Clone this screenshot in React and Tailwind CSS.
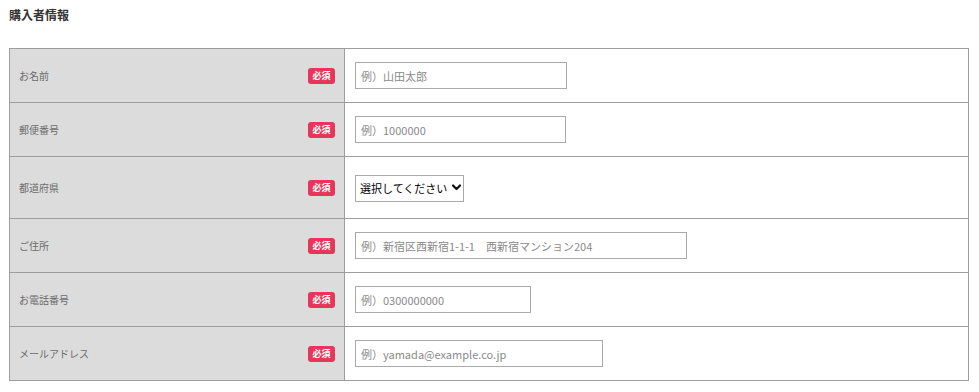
import React from "react";

const font = { fontFamily: '"Noto Sans CJK JP", "Noto Sans", sans-serif' };

function Badge() {
  return (
    <span className="inline-flex h-[16px] w-[27px] items-center justify-center rounded-[3px] bg-[#e8365b] text-[9px] font-bold leading-none text-white">
      必須
    </span>
  );
}

function Row({ label, tall, children, last }) {
  return (
    <div
      className={`flex box-border ${tall ? "h-[62px]" : "h-[54px]"} border-b border-[#9d9d9d]`}
    >
      <div className="box-border flex w-[335px] shrink-0 items-center justify-between border-r border-[#9d9d9d] bg-[#dcdcdc] pl-[9px] pr-[9px]">
        <span className="text-[10px] text-[#6b6b6b]">{label}</span>
        <Badge />
      </div>
      <div className="flex flex-1 items-center bg-white pl-[10px]">{children}</div>
    </div>
  );
}

function Input({ w, ph }) {
  return (
    <input
      type="text"
      placeholder={ph}
      className={`box-border h-[27px] ${w} border border-[#aaaaaa] bg-white px-[5px] text-[11px] text-[#333] outline-none placeholder:text-[#8a8a8a]`}
      style={font}
    />
  );
}

export default function App() {
  return (
    <div className="min-h-[392px] w-[979px] bg-white" style={font}>
      <div className="pl-[9px] pt-[7px] text-[12px] font-bold leading-[16px] text-[#333]">
        購入者情報
      </div>
      <div className="ml-[9px] mt-[25px] box-border w-[960px] border-l border-r border-t border-[#9d9d9d]">
        <Row label="お名前">
          <Input w="w-[212px]" ph="例）山田太郎" />
        </Row>
        <Row label="郵便番号">
          <Input w="w-[211px]" ph="例）1000000" />
        </Row>
        <Row label="都道府県" tall>
          <div className="relative h-[27px] w-[109px]">
            <select
              className="box-border h-[27px] w-[109px] appearance-none border border-[#aaaaaa] bg-white pl-[4px] text-[11px] text-black outline-none"
              style={font}
              defaultValue=""
            >
              <option value="">選択してください</option>
            </select>
            <svg
              className="pointer-events-none absolute right-[3px] top-[10px]"
              width="9"
              height="7"
              viewBox="0 0 9 7"
            >
              <path d="M1 1.5 L4.5 5 L8 1.5" fill="none" stroke="#111" strokeWidth="2.2" strokeLinecap="round" strokeLinejoin="round" />
            </svg>
          </div>
        </Row>
        <Row label="ご住所">
          <Input w="w-[332px]" ph="例）新宿区西新宿1-1-1　西新宿マンション204" />
        </Row>
        <Row label="お電話番号">
          <Input w="w-[176px]" ph="例）0300000000" />
        </Row>
        <Row label="メールアドレス">
          <Input w="w-[248px]" ph="例）yamada@example.co.jp" />
        </Row>
      </div>
    </div>
  );
}
